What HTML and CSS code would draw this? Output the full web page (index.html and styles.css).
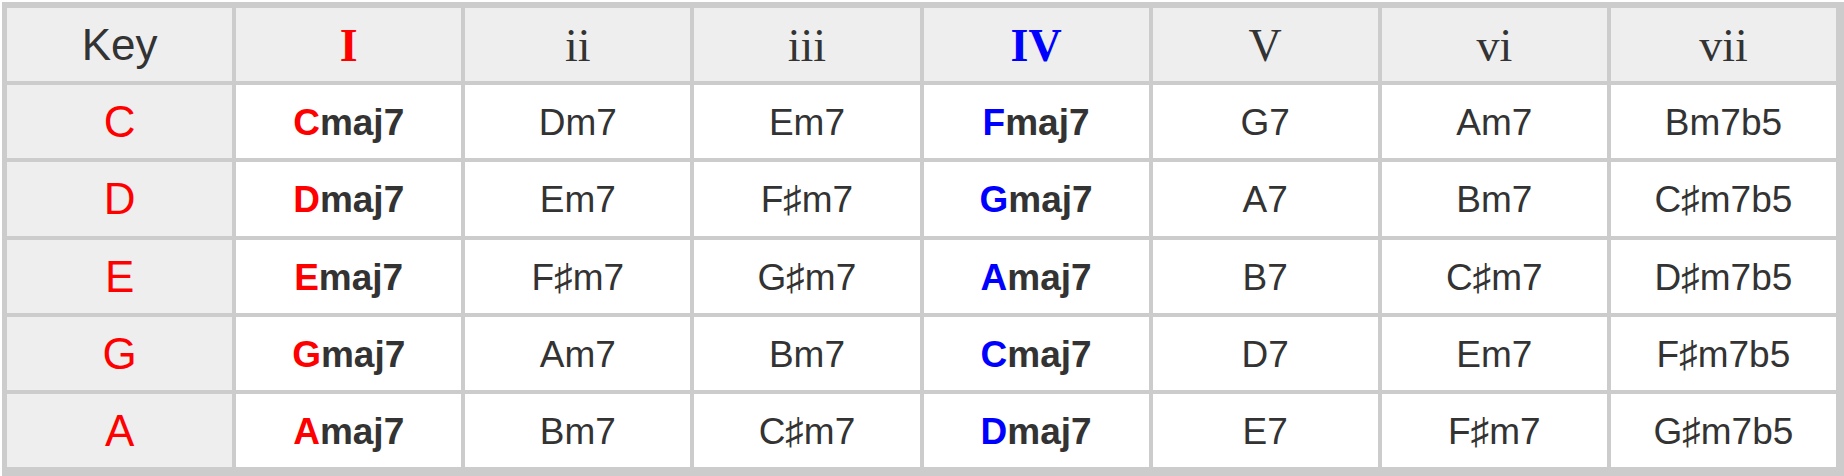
FILE: index.html
```html
<!DOCTYPE html>
<html>
<head>
<meta charset="utf-8">
<link rel="stylesheet" href="styles.css">
</head>
<body>
<div class="chart">
  <div class="cell head key-head">Key</div>
  <div class="cell head roman bold red">I</div>
  <div class="cell head roman">ii</div>
  <div class="cell head roman">iii</div>
  <div class="cell head roman bold blue">IV</div>
  <div class="cell head roman">V</div>
  <div class="cell head roman">vi</div>
  <div class="cell head roman">vii</div>

  <div class="cell key red">C</div>
  <div class="cell chord bold"><span class="red">C</span>maj7</div>
  <div class="cell chord">Dm7</div>
  <div class="cell chord">Em7</div>
  <div class="cell chord bold"><span class="blue">F</span>maj7</div>
  <div class="cell chord">G7</div>
  <div class="cell chord">Am7</div>
  <div class="cell chord">Bm7b5</div>

  <div class="cell key red">D</div>
  <div class="cell chord bold"><span class="red">D</span>maj7</div>
  <div class="cell chord">Em7</div>
  <div class="cell chord">F♯m7</div>
  <div class="cell chord bold"><span class="blue">G</span>maj7</div>
  <div class="cell chord">A7</div>
  <div class="cell chord">Bm7</div>
  <div class="cell chord">C♯m7b5</div>

  <div class="cell key red">E</div>
  <div class="cell chord bold"><span class="red">E</span>maj7</div>
  <div class="cell chord">F♯m7</div>
  <div class="cell chord">G♯m7</div>
  <div class="cell chord bold"><span class="blue">A</span>maj7</div>
  <div class="cell chord">B7</div>
  <div class="cell chord">C♯m7</div>
  <div class="cell chord">D♯m7b5</div>

  <div class="cell key red">G</div>
  <div class="cell chord bold"><span class="red">G</span>maj7</div>
  <div class="cell chord">Am7</div>
  <div class="cell chord">Bm7</div>
  <div class="cell chord bold"><span class="blue">C</span>maj7</div>
  <div class="cell chord">D7</div>
  <div class="cell chord">Em7</div>
  <div class="cell chord">F♯m7b5</div>

  <div class="cell key red">A</div>
  <div class="cell chord bold"><span class="red">A</span>maj7</div>
  <div class="cell chord">Bm7</div>
  <div class="cell chord">C♯m7</div>
  <div class="cell chord bold"><span class="blue">D</span>maj7</div>
  <div class="cell chord">E7</div>
  <div class="cell chord">F♯m7</div>
  <div class="cell chord">G♯m7b5</div>
</div>
</body>
</html>
```
FILE: styles.css
```css
html, body {
  margin: 0;
  padding: 0;
  background: #fff;
}

.chart {
  box-sizing: border-box;
  width: 1842px;
  margin: 2px 0 0 2px;
  padding: 6px 8px 9px 5px;
  background: #ccc;
  display: grid;
  grid-template-columns: repeat(8, 1fr);
  grid-template-rows: repeat(6, 73.2px);
  gap: 4px;
  color: #333;
  font-family: "Liberation Sans", Arial, sans-serif;
}

.cell {
  box-sizing: border-box;
  display: flex;
  align-items: center;
  justify-content: center;
  background: #fff;
  line-height: 1;
  white-space: nowrap;
}

.head {
  background: #eee;
}

.key-head {
  font-size: 44px;
  padding-top: 1px;
}

.roman {
  font-family: "Liberation Serif", "Times New Roman", serif;
  font-size: 46px;
  padding-top: 3px;
}

.key {
  background: #eee;
  font-size: 44px;
  padding-top: 1px;
}

.chord {
  font-size: 37px;
  padding-top: 2px;
}

.bold {
  font-weight: bold;
}

.red {
  color: #f00;
}

.blue {
  color: #00f;
}
```
